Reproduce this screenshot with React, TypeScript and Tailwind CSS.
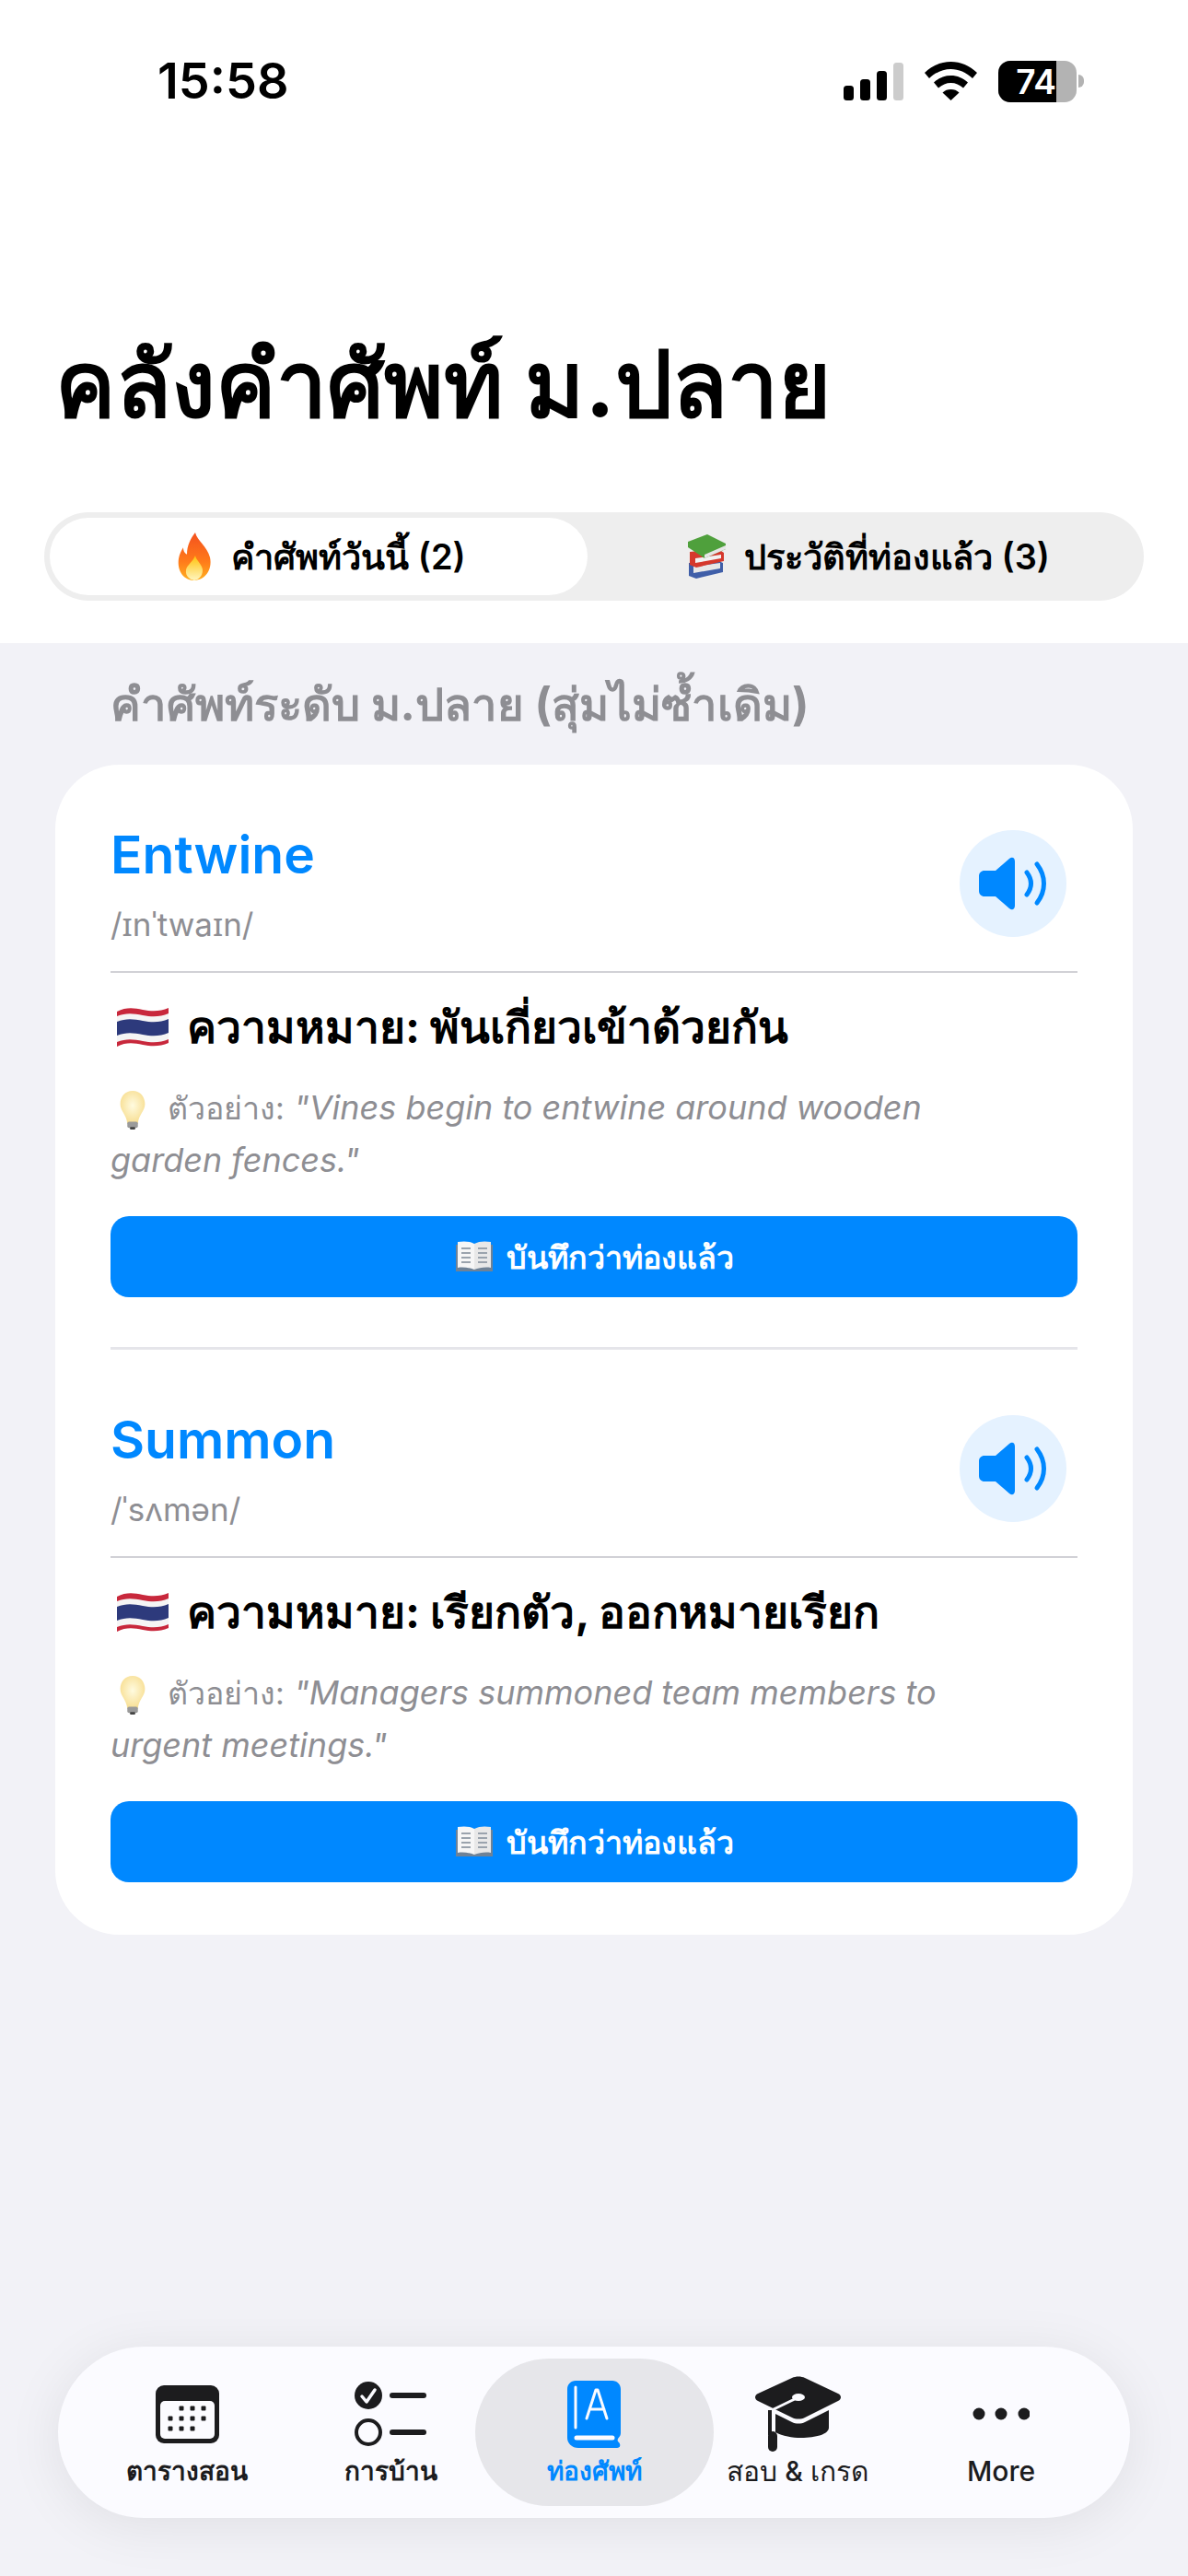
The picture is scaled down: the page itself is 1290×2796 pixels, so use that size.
import React from 'react';

const font = { fontFamily: 'Inter, "Noto Sans", sans-serif' };

const FireEmoji = () => (
  <svg width="44" height="54" viewBox="0 0 44 50" preserveAspectRatio="none">
    <defs>
      <linearGradient id="fire" x1="0" y1="0" x2="0" y2="1">
        <stop offset="0" stopColor="#f4511e" />
        <stop offset="0.6" stopColor="#ff7a1a" />
        <stop offset="1" stopColor="#ffb020" />
      </linearGradient>
      <linearGradient id="fireIn" x1="0" y1="0" x2="0" y2="1">
        <stop offset="0" stopColor="#ffc107" />
        <stop offset="1" stopColor="#fff6c0" />
      </linearGradient>
    </defs>
    <path d="M23 1c2 8 13 14 16 25 3 13-6 23-17 23S3 40 5 27c1-5 3-8 5-11 0 4 2 6 4 7 0-9 4-16 9-22z" fill="url(#fire)" />
    <path d="M23 24c1 5 8 9 8 15 0 6-5 10-9 10s-10-4-9-10c0-5 8-9 10-15z" fill="url(#fireIn)" />
  </svg>
);

const BooksEmoji = () => (
  <svg width="46" height="50" viewBox="0 0 46 50">
    <path d="M4 32l30-3 7 3v10L12 49l-8-3z" fill="#3f5ea8" />
    <path d="M9 36l29-4v6l-29 5z" fill="#e8e8e8" />
    <path d="M5 20l31-3 6 4v9L12 37l-7-3z" fill="#d5382c" />
    <path d="M11 27l28-4v4l-28 5z" fill="#f2f2f2" />
    <path d="M3 9L24 1l20 10v6L21 27 3 15z" fill="#4fa03c" />
    <path d="M21 23l23-10v4L21 27z" fill="#e6e6e6" />
  </svg>
);

const FlagEmoji = () => (
  <svg width="58" height="46" viewBox="0 0 58 46">
    <path d="M1 6c10-5 18-4 28-2s19 2 28-2v38c-9 4-18 4-28 2S11 39 1 44z" fill="#c8283c" />
    <path d="M1 11c10-4 18-3 28-1s19 2 28-2v28c-9 4-18 4-28 2S11 35 1 39z" fill="#f5f5f5" />
    <path d="M1 17c10-4 18-3 28-1s19 2 28-2v15c-9 4-18 4-28 2S11 28 1 32z" fill="#2d3a7c" />
  </svg>
);

const BulbEmoji = () => (
  <svg width="32" height="44" viewBox="0 0 32 46">
    <defs>
      <radialGradient id="bulb" cx="0.5" cy="0.45" r="0.6">
        <stop offset="0" stopColor="#fffbe0" />
        <stop offset="1" stopColor="#f7dc8c" />
      </radialGradient>
    </defs>
    <path d="M16 1C7 1 2 8 2 16c0 8 7 12 8 22h12c1-10 8-14 8-22C30 8 25 1 16 1z" fill="url(#bulb)" />
    <rect x="10" y="36" width="12" height="7" rx="2" fill="#9a9a9a" />
    <rect x="13" y="42" width="6" height="3" rx="1" fill="#444" />
  </svg>
);

const OpenBookEmoji = () => (
  <svg width="42" height="36" viewBox="0 0 42 36">
    <path d="M1 5h40v29H1z" fill="#6f8296" />
    <path d="M3 2c6-1 13-1 18 2v28c-5-2-12-3-18-2z" fill="#f6f6f6" />
    <path d="M39 2c-6-1-13-1-18 2v28c5-2 12-3 18-2z" fill="#e8e8e8" />
    <path d="M7 9h10M7 14h10M7 19h10M7 24h10M25 9h10M25 14h10M25 19h10M25 24h10" stroke="#9aa3ad" strokeWidth="2" />
  </svg>
);

const SpeakerIcon = () => (
  <svg width="74" height="58" viewBox="0 0 74 58" fill="none">
    <path d="M6 15h12L33 2c3-2.500 6-1 6 3v48c0 4-3 5.500-6 3L18 43H6c-3.500 0-6-2.500-6-6V21c0-3.500 2.500-6 6-6z" fill="#0088ff" />
    <path d="M52 17c6 8 6 16 0 24" stroke="#0088ff" strokeWidth="5" strokeLinecap="round" />
    <path d="M63 8c10 13 10 29 0 42" stroke="#0088ff" strokeWidth="5" strokeLinecap="round" />
  </svg>
);

const CalendarIcon = () => (
  <svg width="69" height="63" viewBox="0 0 69 63">
    <rect width="69" height="63" rx="9" fill="#1c1c1e" />
    <rect x="5" y="17" width="59" height="41" rx="5" fill="#fbfbff" />
    {[[28, 25], [40, 25], [52, 25], [16, 36], [28, 36], [40, 36], [52, 36], [16, 47], [28, 47], [40, 47]].map(([x, y], i) => (
      <rect key={i} x={x - 2.500} y={y - 2.500} width="5" height="5" rx="1" fill="#1c1c1e" />
    ))}
  </svg>
);

const ChecklistIcon = () => (
  <svg width="78" height="70" viewBox="0 0 78 70" fill="none">
    <circle cx="15" cy="15" r="15" fill="#1c1c1e" />
    <path d="M8 16l5 6 9-13" stroke="#fbfbff" strokeWidth="3.500" strokeLinecap="round" strokeLinejoin="round" />
    <circle cx="15" cy="55" r="13" stroke="#1c1c1e" strokeWidth="4" />
    <rect x="38" y="12" width="40" height="6" rx="3" fill="#1c1c1e" />
    <rect x="38" y="52" width="40" height="6" rx="3" fill="#1c1c1e" />
  </svg>
);

const DictionaryIcon = () => (
  <svg width="58" height="73" viewBox="0 0 58 73" fill="none">
    <path d="M9 0h40c5 0 9 4 9 9v48c0 3-2 4-3 6-1 2 0 3 1 4 2 2 2 6-2 6H12C5 73 0 68 0 62V9c0-5 4-9 9-9z" fill="#0088ff" />
    <path d="M10 62h39" stroke="#fbfbff" strokeWidth="5" strokeLinecap="round" />
    <path d="M9 7v44" stroke="#fbfbff" strokeWidth="3" strokeLinecap="round" />
    <path d="M21 41l10-31h2l10 31M25 31h15" stroke="#fbfbff" strokeWidth="3" strokeLinecap="round" strokeLinejoin="round" />
  </svg>
);

const CapIcon = () => (
  <svg width="93" height="82" viewBox="0 0 93 82">
    <path d="M40 2c4-2 10-2 14 0l36 17c4 2 4 6 0 8L54 45c-4 2-10 2-14 0L3 27c-4-2-4-6 0-8z" fill="#1c1c1e" />
    <ellipse cx="47" cy="23" rx="7" ry="4" fill="#fbfbff" />
    <path d="M47 23L16 38" stroke="#fbfbff" strokeWidth="3" />
    <path d="M22 41l18 9c4 2 10 2 14 0l26-13v19c0 7-14 11-30 11-10 0-20-2-28-6z" fill="#1c1c1e" />
    <rect x="14" y="37" width="4" height="27" fill="#1c1c1e" />
    <rect x="14" y="60" width="10" height="22" rx="5" fill="#1c1c1e" />
  </svg>
);

const DotsIcon = () => (
  <svg width="62" height="14" viewBox="0 0 62 14">
    <circle cx="7" cy="7" r="6.500" fill="#1c1c1e" />
    <circle cx="31" cy="7" r="6.500" fill="#1c1c1e" />
    <circle cx="56" cy="7" r="6.500" fill="#1c1c1e" />
  </svg>
);

const StatusBar = () => (
  <div className="flex h-[148px] items-center pl-[171px] pr-[113px] pt-[28px]">
    <span className="text-[54px] font-semibold leading-none text-black">15:58</span>
    <div className="ml-auto flex items-center">
      <svg width="65" height="41" viewBox="0 0 65 41">
        <rect x="0" y="25" width="11" height="16" rx="3.500" fill="#000" />
        <rect x="18" y="18" width="11" height="23" rx="3.500" fill="#000" />
        <rect x="36" y="9" width="11" height="32" rx="3.500" fill="#000" />
        <rect x="54" y="0" width="11" height="41" rx="3.500" fill="#ccc" />
      </svg>
      <svg className="ml-[23px]" width="57" height="42" viewBox="0 0 57 42">
        <path d="M28.500 0C18 0 8.500 4 0 12l5 6c7-6.500 15-10 23.500-10S45 11.500 52 18l5-6C48.500 4 39 0 28.500 0z" fill="#000" />
        <path d="M28.500 15c-7 0-13 2.500-18.500 7.500l5 6c4-3.500 8.500-5.500 13.500-5.500S38 25 42 28.500l5-6C41.500 17.500 35.500 15 28.500 15z" fill="#000" />
        <path d="M28.500 30c-3.500 0-6.500 1-9 3.500l9 8.500 9-8.500c-2.500-2.500-5.500-3.500-9-3.500z" fill="#000" />
      </svg>
      <div className="ml-[23px] flex items-center">
        <div className="flex h-[45px] w-[85px] overflow-hidden rounded-[13px] bg-[#b3b3b3]">
          <div className="flex h-full w-[63px] items-center justify-end bg-black">
            <span className="text-[37px] font-semibold leading-none text-white">74</span>
          </div>
        </div>
        <div className="ml-[2px] h-[14px] w-[6px] rounded-r-full bg-[#b3b3b3]" />
      </div>
    </div>
  </div>
);

const Segmented = () => (
  <div className="mx-[48px] mt-[71px] flex h-[96px] rounded-[48px] bg-[#eeeeee] p-[6px]">
    <div className="flex w-[584px] items-center justify-center gap-[18px] rounded-[42px] bg-white pl-[3px]">
      <FireEmoji />
      <span className="text-[38px] font-semibold leading-none text-black">คำศัพท์วันนี้ (2)</span>
    </div>
    <div className="flex flex-1 items-center justify-center gap-[18px] pl-[10px]">
      <BooksEmoji />
      <span className="text-[38px] font-semibold leading-none text-black">ประวัติที่ท่องแล้ว (3)</span>
    </div>
  </div>
);

interface WordData {
  word: string;
  ipa: string;
  meaning: string;
  example: string;
}

const words: WordData[] = [
  {
    word: 'Entwine',
    ipa: '/ɪnˈtwaɪn/',
    meaning: 'ความหมาย: พันเกี่ยวเข้าด้วยกัน',
    example: '"Vines begin to entwine around wooden garden fences."',
  },
  {
    word: 'Summon',
    ipa: '/ˈsʌmən/',
    meaning: 'ความหมาย: เรียกตัว, ออกหมายเรียก',
    example: '"Managers summoned team members to urgent meetings."',
  },
];

const WordItem = ({ item }: { item: WordData }) => (
  <div>
    <div className="flex h-[226px] items-start justify-between border-b-2 border-[#d1d1d6]">
      <div>
        <div className="mt-[60px] text-[57px] font-semibold leading-[76px] text-[#0088ff]">{item.word}</div>
        <div className="mt-[15px] text-[35px] leading-[44px] text-[#8e8e93]">{item.ipa}</div>
      </div>
      <div className="mr-[12px] mt-[71px] flex h-[116px] w-[116px] items-center justify-center rounded-full bg-[#e5f2ff]">
        <SpeakerIcon />
      </div>
    </div>
    <div className="ml-[6px] mt-[29px] flex items-center gap-[19px]">
      <FlagEmoji />
      <span className="text-[48px] font-bold leading-[60px] text-black">{item.meaning}</span>
    </div>
    <p className="mt-[29px] pr-[46px] text-[36px] leading-[57px] text-[#8e8e93]">
      <span className="ml-[8px] mr-[22px] inline-block h-[44px] align-middle"><BulbEmoji /></span>
      <span className="text-[34px]">ตัวอย่าง:</span> <span className="italic">{item.example}</span>
    </p>
    <button className="mt-[32px] flex h-[88px] w-full items-center justify-center gap-[14px] rounded-[20px] bg-[#0088ff] text-[34px] font-semibold text-white">
      <OpenBookEmoji />
      บันทึกว่าท่องแล้ว
    </button>
  </div>
);

const App: React.FC = () => {
  return (
    <div className="flex h-[2796px] w-[1290px] flex-col bg-[#f2f2f7]" style={font}>
      <div className="h-[698px] bg-white">
        <StatusBar />
        <h1 className="ml-[60px] mt-[209px] text-[98px] font-bold leading-[120px] text-black">คลังคำศัพท์ ม.ปลาย</h1>
        <div className="h-[8px]" />
        <Segmented />
      </div>

      <div className="ml-[120px] mt-[37px] text-[49px] font-bold leading-[60px] text-[#8e8e93]">คำศัพท์ระดับ ม.ปลาย (สุ่มไม่ซ้ำเดิม)</div>

      <div className="mx-[60px] mt-[35px] h-[1270px] rounded-[70px] bg-white px-[60px]">
        {words.map((item, index) => (
          <div key={item.word} className={index === 0 ? 'h-[635px] border-b-[3px] border-[#e5e5ea]' : ''}>
            <WordItem item={item} />
          </div>
        ))}
      </div>

      <div className="mx-[63px] mb-[63px] mt-auto flex h-[186px] items-center justify-center rounded-[93px] bg-[#fbfbff] shadow-[0_8px_60px_rgba(0,0,0,0.08)]">
        {[
          { label: 'ตารางสอน', icon: <CalendarIcon /> },
          { label: 'การบ้าน', icon: <ChecklistIcon /> },
          { label: 'ท่องศัพท์', icon: <DictionaryIcon />, active: true },
          { label: 'สอบ & เกรด', icon: <CapIcon />, light: true },
          { label: 'More', icon: <DotsIcon />, light: true },
        ].map((tab) => (
          <div
            key={tab.label}
            className={
              tab.active
                ? 'mx-[-19px] flex h-[160px] w-[259px] flex-col items-center rounded-[80px] bg-[#e6e6ea] pt-[18px] text-[#0088ff]'
                : 'flex h-[160px] w-[221px] flex-col items-center pt-[18px] text-[#1c1c1e]'
            }
          >
            <div className="flex h-[84px] items-center justify-center">{tab.icon}</div>
            <div className={tab.light ? 'mt-[2px] text-[30px] font-medium leading-[36px]' : 'mt-[2px] text-[28px] font-semibold leading-[36px]'}>{tab.label}</div>
          </div>
        ))}
      </div>
    </div>
  );
};

export default App;
